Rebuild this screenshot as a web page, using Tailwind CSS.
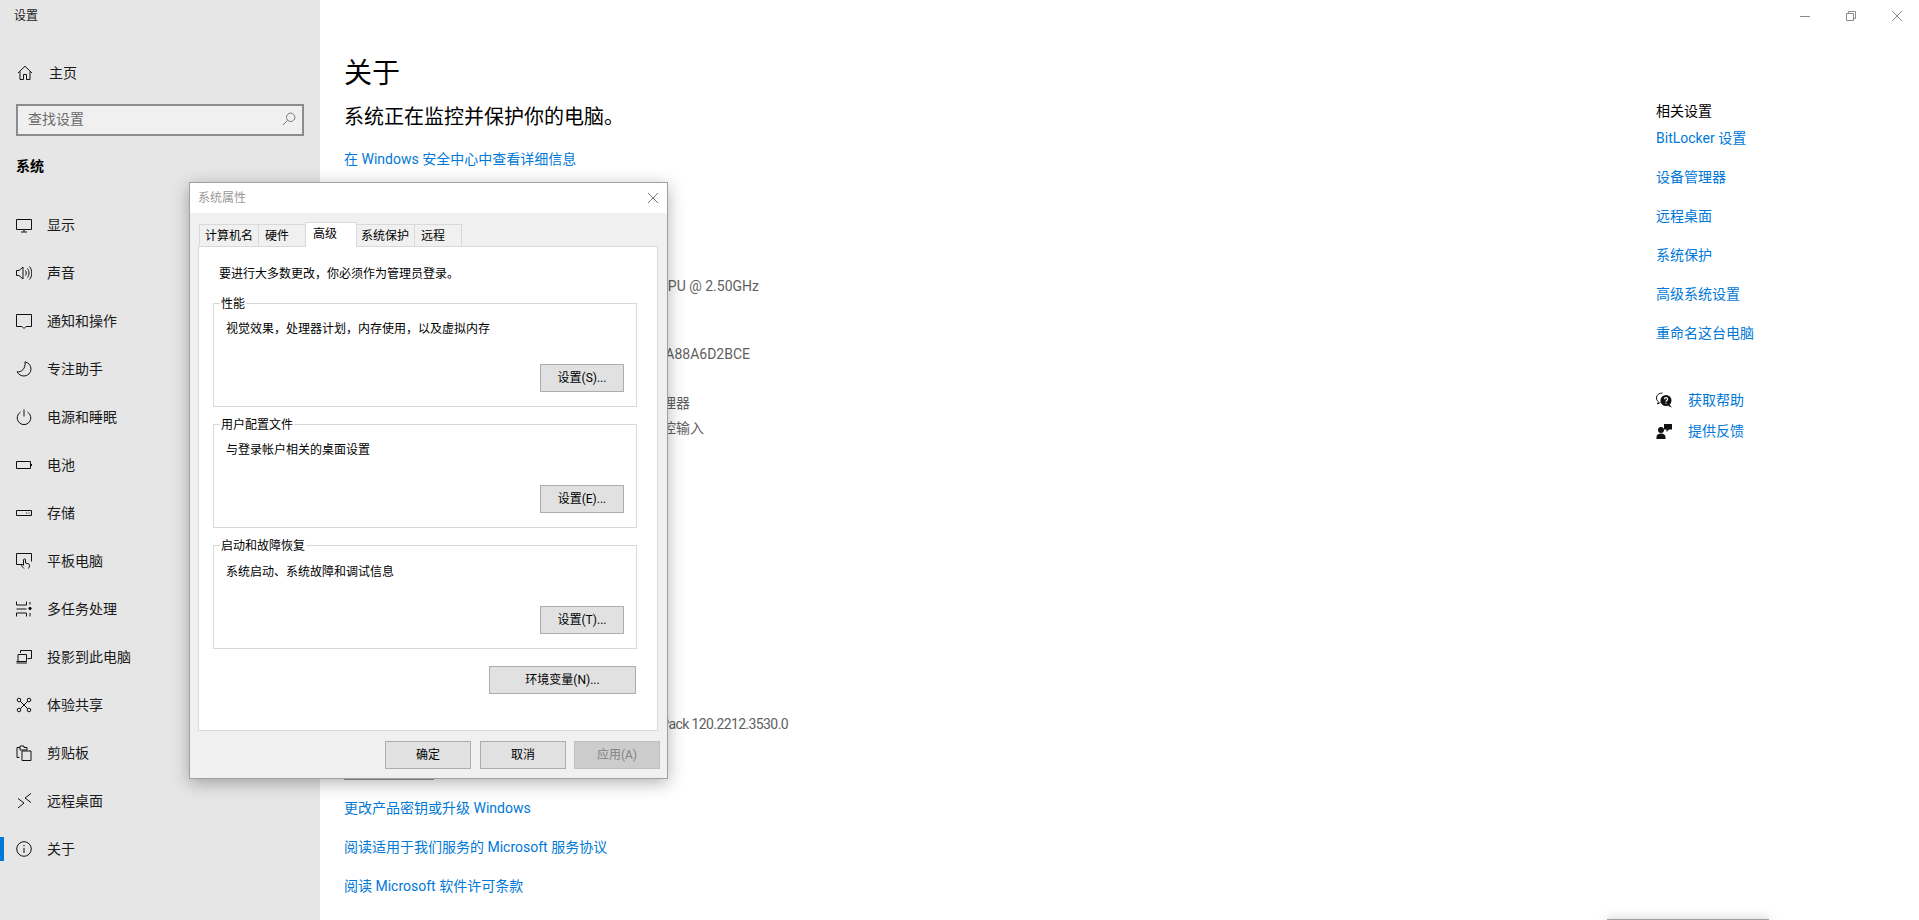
<!DOCTYPE html>
<html lang="zh-CN">
<head>
  <meta charset="UTF-8" />
  <title>设置</title>
  <script src="https://cdn.jsdelivr.net/npm/@tailwindcss/browser@4"></script>
</head>
<body class="relative h-[920px] w-[1919px] overflow-hidden bg-white font-['Roboto','Noto_Sans_CJK_SC',sans-serif] text-[14px] leading-[20px] text-[#1a1a1a]">
  <div class="flex h-[920px]">

    <!-- 左侧导航 -->
    <aside class="w-[320px] shrink-0 bg-[#e6e6e6]">
      <div class="flex h-8 items-center pl-[14px] text-[12px]">设置</div>
      <a class="mt-[17px] flex h-12 items-center gap-4 pl-[17px]">
        <svg class="h-4 w-4" viewBox="0 0 16 16" fill="none" stroke="#111" stroke-width="1"><path d="M1 8 8 1.200 15 8M3 6.500v8h3.500V9.500h3v5H13v-8"/></svg>
        <span>主页</span>
      </a>
      <div class="mt-[7px] ml-4 flex h-8 w-[288px] items-center justify-between border-2 border-[#8c8c8c] bg-[#f0f0f0] pr-[6px] pb-[2px] pl-[10px] text-[#6b6b6b]">
        <span>查找设置</span>
        <svg class="h-[14px] w-[14px]" viewBox="0 0 14 14" fill="none" stroke="#777" stroke-width="1"><circle cx="8.700" cy="5.300" r="4.200"/><path d="M5.700 8.300 1 13"/></svg>
      </div>
      <div class="mt-4 flex h-7 items-center pl-4 font-bold text-black">系统</div>

      <nav class="mt-[21px]">
        <a class="flex h-12 items-center gap-[15px] pl-4">
          <svg class="h-4 w-4" viewBox="0 0 16 16" fill="none" stroke="#111"><path d="M.5 2.500h15v10H.5zM8 12.500V15M5 15h6"/></svg>
          <span>显示</span>
        </a>
        <a class="flex h-12 items-center gap-[15px] pl-4">
          <svg class="h-4 w-4" viewBox="0 0 16 16" fill="none" stroke="#111"><path d="M.5 5.500h2.500L7 2v12L3 10.500H.5zM9.500 5.500c1 1.500 1 3.500 0 5M11.500 3.500c2 2.500 2 6.500 0 9M13.500 1.500c3 3.500 3 9.500 0 13"/></svg>
          <span>声音</span>
        </a>
        <a class="flex h-12 items-center gap-[15px] pl-4">
          <svg class="h-4 w-4" viewBox="0 0 16 16" fill="none" stroke="#111"><path d="M.5 1.500h15v12H10l-2 2-2-2H.5z"/></svg>
          <span>通知和操作</span>
        </a>
        <a class="flex h-12 items-center gap-[15px] pl-4">
          <svg class="h-4 w-4" viewBox="0 0 16 16" fill="none" stroke="#111"><path d="M9 .8c3.500 1 6 3.500 6 7.200a7 7 0 0 1-7 7c-3 0-5.500-1.500-7-4.200 4.500.8 9-3.500 8-10z"/></svg>
          <span>专注助手</span>
        </a>
        <a class="flex h-12 items-center gap-[15px] pl-4">
          <svg class="h-4 w-4" viewBox="0 0 16 16" fill="none" stroke="#111"><path d="M8 .5v7M4.500 3a6.800 6.800 0 1 0 7 0"/></svg>
          <span>电源和睡眠</span>
        </a>
        <a class="flex h-12 items-center gap-[15px] pl-4">
          <svg class="h-4 w-4" viewBox="0 0 16 16" fill="none" stroke="#111"><path d="M.5 4.500h14v7H.5z"/><path d="M15.500 7v2"/></svg>
          <span>电池</span>
        </a>
        <a class="flex h-12 items-center gap-[15px] pl-4">
          <svg class="h-4 w-4" viewBox="0 0 16 16" fill="none" stroke="#111"><path d="M.5 5.500h15v5H.5zM10 8h1M12.500 8h1"/></svg>
          <span>存储</span>
        </a>
        <a class="flex h-12 items-center gap-[15px] pl-4">
          <svg class="h-4 w-4" viewBox="0 0 16 16" fill="none" stroke="#111"><path d="M6 11.500H.5V.5h15v8M8 15.500c-1-1-2.500-2.500-2.500-3.500 0-1 1.500-.5 2 .3V7c0-1.500 2-1.500 2 0v3l3 .8c1 .3 1 1 1 2 0 1-.5 2-1 2.700"/></svg>
          <span>平板电脑</span>
        </a>
        <a class="flex h-12 items-center gap-[15px] pl-4">
          <svg class="h-4 w-4" viewBox="0 0 16 16" fill="none" stroke="#111"><path d="M.5.500v3.500h10V.5M.5 15.500V12h10v3.500M.5 8h10M14 1v2.500M14 12v3.500"/><circle cx="14" cy="7.500" r="1.200" fill="#111"/></svg>
          <span>多任务处理</span>
        </a>
        <a class="flex h-12 items-center gap-[15px] pl-4">
          <svg class="h-4 w-4" viewBox="0 0 16 16" fill="none" stroke="#111"><path d="M4.500 4V1.500h11v8h-4M.5 12.500h10v-7H2v7M.5 14h10.500"/></svg>
          <span>投影到此电脑</span>
        </a>
        <a class="flex h-12 items-center gap-[15px] pl-4">
          <svg class="h-4 w-4" viewBox="0 0 16 16" fill="none" stroke="#111"><circle cx="3" cy="3" r="1.800"/><circle cx="13" cy="3" r="1.800"/><circle cx="3" cy="13" r="1.800"/><circle cx="13" cy="13" r="1.800"/><path d="M4.300 4.300 11.700 11.700M11.700 4.300 4.300 11.700"/></svg>
          <span>体验共享</span>
        </a>
        <a class="flex h-12 items-center gap-[15px] pl-4">
          <svg class="h-4 w-4" viewBox="0 0 16 16" fill="none" stroke="#111"><path d="M3.500 12.500h-2.500V2.500h3V1h4v1.500h3V5M6 15.500h9V6H6zM4 2.500V5h7"/></svg>
          <span>剪贴板</span>
        </a>
        <a class="flex h-12 items-center gap-[15px] pl-4">
          <svg class="h-4 w-4" viewBox="0 0 16 16" fill="none" stroke="#111"><path d="M2 5.500 8 10 2 15M15 .5 9 5l6 4.500"/></svg>
          <span>远程桌面</span>
        </a>
        <a class="relative flex h-12 items-center gap-[15px] pl-4">
          <span class="absolute top-3 left-0 h-6 w-1 bg-[#0078d7]"></span>
          <svg class="h-4 w-4" viewBox="0 0 16 16" fill="none" stroke="#111"><circle cx="8" cy="8" r="7.300"/><path d="M8 7v5M8 4v1.300"/></svg>
          <span>关于</span>
        </a>
      </nav>
    </aside>

    <!-- 主内容 -->
    <main class="relative flex flex-1">
      <div class="flex-1 pt-[54px] pl-[24px]">
        <h1 class="h-10 text-[28px] leading-[40px] text-black">关于</h1>
        <p class="mt-[9px] h-7 text-[20px] leading-[28px] text-black">系统正在监控并保护你的电脑。</p>
        <a class="mt-[18px] block text-[#0078d7]">在 Windows 安全中心中查看详细信息</a>

        <p class="mt-[107px] w-[415px] text-right text-[#5f5f5f]">CPU @ 2.50GHz</p>
        <p class="mt-[48px] w-[406px] text-right text-[#5f5f5f]">A88A6D2BCE</p>
        <div class="pl-[304px] text-[#5f5f5f]">
          <p class="mt-[29px]">处理器</p>
          <p class="mt-[5px]">触控输入</p>
        </div>
        <p class="mt-[276px] w-[444px] text-right tracking-[-0.6px] text-[#5f5f5f]">Pack 120.2212.3530.0</p>

        <div class="mt-[15px] h-[31px] w-[90px] border-b border-[#999]"></div>
        <a class="mt-[18px] block text-[#0078d7]">更改产品密钥或升级 Windows</a>
        <a class="mt-[19px] block text-[#0078d7]">阅读适用于我们服务的 Microsoft 服务协议</a>
        <a class="mt-[19px] block text-[#0078d7]">阅读 Microsoft 软件许可条款</a>
      </div>

      <div class="w-[263px] shrink-0 pt-[101px]">
        <h2 class="text-black">相关设置</h2>
        <div class="mt-[7px] flex flex-col gap-[19px] text-[#0078d7]">
          <a>BitLocker 设置</a>
          <a>设备管理器</a>
          <a>远程桌面</a>
          <a>系统保护</a>
          <a>高级系统设置</a>
          <a>重命名这台电脑</a>
        </div>
        <a class="mt-[47px] flex items-center gap-4 text-[#0078d7]">
          <svg class="h-4 w-4" viewBox="0 0 16 16"><path d="M6.500 1C3 1 .5 3 .5 6c0 1.500.7 2.800 2 3.700L1.500 12l3-1.500" fill="none" stroke="#111"/><circle cx="10" cy="8.500" r="5.500" fill="#111"/><path d="M13.500 12.500 16 15.500l-4-1.500z" fill="#111"/><path d="M8.500 7.200c0-2 3-2 3 0 0 1.300-1.500 1.300-1.500 2.500M10 10.800v1" fill="none" stroke="#fff" stroke-width="1.200"/></svg>
          <span>获取帮助</span>
        </a>
        <a class="mt-[11px] flex items-center gap-4 text-[#0078d7]">
          <svg class="h-4 w-4" viewBox="0 0 16 16" fill="#111"><circle cx="5" cy="7" r="3"/><path d="M.5 16v-2c0-2 2-3.500 4.500-3.500s4.500 1.500 4.500 3.500v2zM8 1h8v5.500h-3L10.500 9V6.500H8z"/></svg>
          <span>提供反馈</span>
        </a>
      </div>

      <!-- 窗口按钮 -->
      <div class="absolute top-[11px] right-[17px] flex items-center gap-[36px]">
        <svg class="h-[10px] w-[10px]" viewBox="0 0 10 10" fill="none" stroke="#8a8a8a"><path d="M0 5.500h10"/></svg>
        <svg class="h-[10px] w-[10px]" viewBox="0 0 10 10" fill="none" stroke="#8a8a8a"><path d="M.5 2.500h7v7h-7zM2.500 2.500v-2h7v7h-2"/></svg>
        <svg class="h-[10px] w-[10px]" viewBox="0 0 10 10" fill="none" stroke="#8a8a8a"><path d="M0 0l10 10M10 0 0 10"/></svg>
      </div>
    </main>
  </div>

  <!-- 系统属性对话框 -->
  <section class="absolute top-[182px] left-[189px] flex h-[597px] w-[479px] flex-col border border-[#a0a0a0] bg-[#f0f0f0] text-[12px] leading-[16px] text-black shadow-[0_4px_16px_rgba(0,0,0,0.3)]">
    <header class="flex h-[30px] shrink-0 items-center justify-between bg-white pr-[9px] pl-[8px] text-[#999]">
      <span>系统属性</span>
      <svg class="h-[10px] w-[10px]" viewBox="0 0 10 10" fill="none" stroke="#777"><path d="M0 0l10 10M10 0 0 10"/></svg>
    </header>

    <div class="mt-[9px] flex h-6 items-end pl-[9px]">
      <div class="h-[22px] w-[60px] border border-b-0 border-[#d9d9d9] pl-[5px] leading-[23px]">计算机名</div>
      <div class="-ml-px h-[22px] w-[48px] border border-b-0 border-[#d9d9d9] pl-[6px] leading-[23px]">硬件</div>
      <div class="relative z-10 -mb-px -ml-px h-[25px] w-[52px] border border-b-0 border-[#d9d9d9] bg-white pl-[7px] leading-[23px]">高级</div>
      <div class="-ml-px h-[22px] w-[59px] border border-b-0 border-[#d9d9d9] pl-[4px] leading-[23px]">系统保护</div>
      <div class="-ml-px h-[22px] w-[48px] border border-b-0 border-[#d9d9d9] pl-[6px] leading-[23px]">远程</div>
    </div>

    <div class="ml-[8px] h-[485px] w-[460px] border border-[#d9d9d9] bg-white pt-[19px]">
      <p class="pl-[20px]">要进行大多数更改，你必须作为管理员登录。</p>

      <fieldset class="mt-[13px] ml-[14px] h-[112px] w-[424px] border border-[#d9d9d9]">
        <legend class="ml-[6px] h-4 px-px leading-[18px]">性能</legend>
        <p class="mt-[10px] pl-[12px]">视觉效果，处理器计划，内存使用，以及虚拟内存</p>
        <button class="float-right mt-[27px] mr-[12px] h-[28px] w-[84px] border border-[#adadad] bg-[#e1e1e1]">设置(S)...</button>
      </fieldset>

      <fieldset class="mt-[9px] ml-[14px] h-[112px] w-[424px] border border-[#d9d9d9]">
        <legend class="ml-[6px] h-4 px-px leading-[18px]">用户配置文件</legend>
        <p class="mt-[10px] pl-[12px]">与登录帐户相关的桌面设置</p>
        <button class="float-right mt-[27px] mr-[12px] h-[28px] w-[84px] border border-[#adadad] bg-[#e1e1e1]">设置(E)...</button>
      </fieldset>

      <fieldset class="mt-[9px] ml-[14px] h-[112px] w-[424px] border border-[#d9d9d9]">
        <legend class="ml-[6px] h-4 px-px leading-[18px]">启动和故障恢复</legend>
        <p class="mt-[11px] pl-[12px]">系统启动、系统故障和调试信息</p>
        <button class="float-right mt-[26px] mr-[12px] h-[28px] w-[84px] border border-[#adadad] bg-[#e1e1e1]">设置(T)...</button>
      </fieldset>

      <div class="mt-[17px] flex justify-end pr-[21px]">
        <button class="h-[28px] w-[147px] border border-[#adadad] bg-[#e1e1e1]">环境变量(N)...</button>
      </div>
    </div>

    <footer class="mt-[10px] flex justify-end gap-[8px] pr-[7px]">
      <button class="mr-px h-[28px] w-[86px] border border-[#adadad] bg-[#e1e1e1]">确定</button>
      <button class="h-[28px] w-[86px] border border-[#adadad] bg-[#e1e1e1]">取消</button>
      <button class="h-[28px] w-[86px] border border-[#bfbfbf] bg-[#cccccc] text-[#838383]">应用(A)</button>
    </footer>
  </section>

  <!-- 底部提示条的上沿 -->
  <div class="absolute top-[919px] left-[1607px] h-[10px] w-[162px] border-t border-[#a0a0a0] bg-white shadow-[0_0_12px_rgba(0,0,0,0.2)]"></div>
</body>
</html>
